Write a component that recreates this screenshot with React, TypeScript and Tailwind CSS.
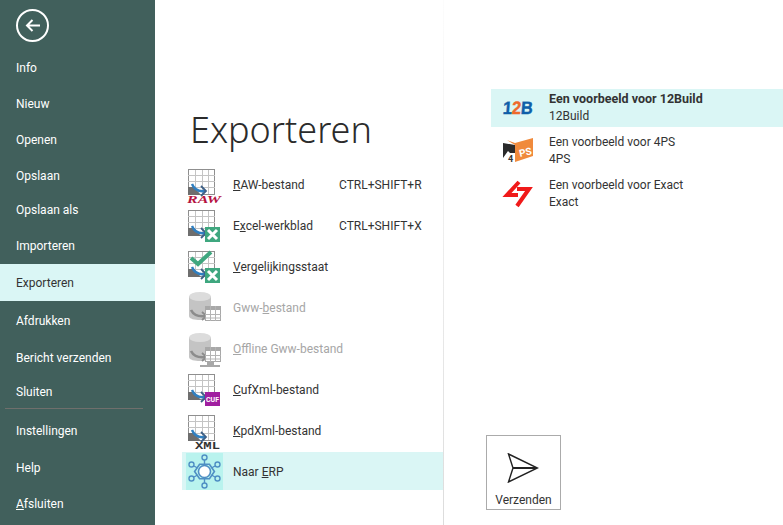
const font = { fontFamily: 'Roboto, "Noto Sans", sans-serif' }

function GridBase() {
    return (
        <g>
            <rect x="1.5" y="1.5" width="26" height="25" fill="#fff" stroke="#8f8f8f" />
            <path d="M1 7.5H28M1 13.5H28M1 19.5H28M8.5 2V26M15.5 2V26M21.5 2V26" stroke="#c4c4c4" fill="none" />
            <path d="M1 19H7L14 27H1Z" fill="#6e6e6e" />
        </g>
    )
}

function Arrow({ y = 22 }: { y?: number }) {
    return (
        <g>
            <path d={`M5 ${y - 3}C7 ${y + 2} 11 ${y + 5} 18 ${y + 4}`} stroke="#2f7fc1" strokeWidth="2.4" fill="none" />
            <path d={`M14 ${y - 1}L19 ${y + 4}L14 ${y + 9}`} stroke="#3d5f86" strokeWidth="1.8" fill="none" />
        </g>
    )
}

function ExcelBadge() {
    return (
        <g>
            <rect x="18" y="18" width="15" height="15" fill="#3fa77f" />
            <path d="M21 21L30 30M30 21L21 30" stroke="#fff" strokeWidth="3" />
        </g>
    )
}

function RawIcon() {
    return (
        <svg width="36" height="38" viewBox="0 0 36 38">
            <g transform="translate(0 1)">
                <GridBase />
                <Arrow y={19} />
                <text x="0" y="35" fontSize="11" fontWeight="700" fontStyle="italic" fill="#b5123f" textLength="34" lengthAdjust="spacingAndGlyphs" style={{ fontFamily: '"Liberation Serif", serif' }}>RAW</text>
            </g>
        </svg>
    )
}

function ExcelIcon() {
    return (
        <svg width="36" height="36" viewBox="0 0 36 36">
            <GridBase />
            <Arrow y={20} />
            <ExcelBadge />
        </svg>
    )
}

function CompareIcon() {
    return (
        <svg width="36" height="36" viewBox="0 0 36 36">
            <GridBase />
            <path d="M4 8L11 14L24 2" stroke="#3fa77f" strokeWidth="4" fill="none" />
            <Arrow y={20} />
            <ExcelBadge />
        </svg>
    )
}

function GwwIcon({ offline }: { offline?: boolean }) {
    return (
        <svg width="36" height="36" viewBox="0 0 36 36">
            <path d="M2 5V25C2 28 8 29 13 29C20 29 24 28 24 25V5Z" fill="#c4c4c4" />
            <ellipse cx="13" cy="5.5" rx="11" ry="4.5" fill="#dcdcdc" />
            <path d="M4 19C7 25 12 26 19 25" stroke="#8c8c8c" strokeWidth="2.6" fill="none" />
            <path d="M15 21L19.5 25L15 29" stroke="#8c8c8c" strokeWidth="1.8" fill="none" />
            <rect x="18.5" y="15.5" width="15" height="14" fill="#fff" stroke="#a8a8a8" />
            <rect x="18" y="15" width="16" height="4" fill="#a8a8a8" />
            <path d="M18 23.5H34M18 27H34M23.5 15V30M28.5 15V30" stroke="#b4b4b4" fill="none" />
            {offline && <path d="M13 33H33V35H13ZM20 30H27V33H20Z" fill="#a8a8a8" />}
        </svg>
    )
}

function CufIcon() {
    return (
        <svg width="36" height="36" viewBox="0 0 36 36">
            <GridBase />
            <Arrow y={20} />
            <rect x="18" y="19" width="15" height="14" fill="#a01fa0" />
            <text x="25.5" y="29" fontSize="8" fontWeight="700" fill="#fff" textAnchor="middle" textLength="13" lengthAdjust="spacingAndGlyphs" style={font}>CUF</text>
        </svg>
    )
}

function XmlIcon() {
    return (
        <svg width="40" height="40" viewBox="0 0 40 40">
            <g transform="translate(0 2)">
                <GridBase />
                <Arrow y={19} />
                <text x="8" y="35" fontSize="11" fontWeight="700" fill="#333" textLength="25" lengthAdjust="spacingAndGlyphs" style={{ fontFamily: '"Liberation Mono", monospace' }}>XML</text>
            </g>
        </svg>
    )
}

function ErpIcon() {
    return (
        <svg width="37" height="37" viewBox="0 0 37 37" className="bg-[#b9f3ee]">
            <g stroke="#4f8fc4" strokeWidth="1.4" fill="none">
                <path d="M18.5 7V11M18.5 26V30M11.5 15L8 13M25.5 15L29 13M11.5 22L8 24M25.5 22L29 24" />
                <circle cx="18.5" cy="4.5" r="2.5" />
                <circle cx="18.5" cy="32.5" r="2.5" />
                <circle cx="5.5" cy="11.5" r="2.5" />
                <circle cx="31.5" cy="11.5" r="2.5" />
                <circle cx="5.5" cy="25.5" r="2.5" />
                <circle cx="31.5" cy="25.5" r="2.5" />
                <path d="M13 10.5H24L29.5 18.5L24 26.5H13L7.5 18.5Z" strokeWidth="1.8" transform="translate(18.5 18.5) scale(.9) translate(-18.5 -18.5)" />
            </g>
            <circle cx="18.5" cy="18.5" r="6" fill="#fff" stroke="#4f8fc4" strokeWidth="1.6" />
        </svg>
    )
}

function Logo12B() {
    return (
        <svg width="34" height="24" viewBox="0 0 34 24">
            <text x="2" y="18.5" fontSize="18" fontWeight="900" stroke="#0f5ea8" strokeWidth=".5" textLength="30" lengthAdjust="spacingAndGlyphs" transform="skewX(-5)" style={{ fontFamily: '"Liberation Sans", sans-serif' }}>
                <tspan fill="#0f5ea8">1</tspan>
                <tspan fill="#ee6a2c" stroke="#ee6a2c">2</tspan>
                <tspan fill="#0f5ea8">B</tspan>
            </text>
        </svg>
    )
}

function Logo4PS() {
    return (
        <svg width="32" height="26" viewBox="0 0 32 26">
            <path d="M1 5L13 7V15H8L6 13L1 20Z" fill="#2a2a2a" />
            <path d="M13 5L31 0V18L13 24Z" fill="#f08a3c" />
            <path d="M5 2L13 5V7Z" fill="#f08a3c" />
            <text x="17" y="18" fontSize="10" fontWeight="700" fill="#fff" transform="rotate(-12 22 14)" style={font}>PS</text>
            <text x="6" y="24" fontSize="9" fontWeight="700" fill="#333" style={font}>4</text>
        </svg>
    )
}

function LogoExact() {
    return (
        <svg width="32" height="28" viewBox="0 0 32 28" fill="none" stroke="#f01a1a" strokeWidth="4">
            <path d="M17 2L5 15H16" />
            <path d="M15 9H27L15 26" />
        </svg>
    )
}

// heights are what the picture has, the rows are not evenly spaced
const menu = [
    { label: "Info", h: "h-[36px]" },
    { label: "Nieuw", h: "h-[36px]" },
    { label: "Openen", h: "h-[36px]" },
    { label: "Opslaan", h: "h-[36px]" },
    { label: "Opslaan als", h: "h-[33px]" },
    { label: "Importeren", h: "h-[38px]" },
    { label: "Exporteren", h: "h-[37px]", active: true },
    { label: "Afdrukken", h: "h-[39px]" },
    { label: "Bericht verzenden", h: "h-[34px]" },
    { label: "Sluiten", h: "h-[34px]" },
]

const bottomMenu = [
    { label: "Instellingen", h: "h-[42px]" },
    { label: "Help", h: "h-[33px]" },
    { label: <><u>A</u>fsluiten</>, h: "h-[39px]" },
]

const exportRows = [
    { icon: <RawIcon />, label: <><u>R</u>AW-bestand</>, shortcut: "CTRL+SHIFT+R" },
    { icon: <ExcelIcon />, label: <>E<u>x</u>cel-werkblad</>, shortcut: "CTRL+SHIFT+X" },
    { icon: <CompareIcon />, label: <><u>V</u>ergelijkingsstaat</> },
    { icon: <GwwIcon />, label: <>Gww-<u>b</u>estand</>, disabled: true },
    { icon: <GwwIcon offline />, label: <><u>O</u>ffline Gww-bestand</>, disabled: true },
    { icon: <CufIcon />, label: <><u>C</u>ufXml-bestand</> },
    { icon: <XmlIcon />, label: <><u>K</u>pdXml-bestand</> },
]

const erpRows = [
    { icon: <Logo12B />, title: "Een voorbeeld voor 12Build", sub: "12Build", active: true },
    { icon: <Logo4PS />, title: "Een voorbeeld voor 4PS", sub: "4PS" },
    { icon: <LogoExact />, title: "Een voorbeeld voor Exact", sub: "Exact" },
]

export default function App() {
    return (
        <div className="flex h-[525px] w-[783px] overflow-hidden bg-white text-[12px] text-[#333]" style={font}>
            <div className="flex w-[155px] shrink-0 flex-col bg-[#41605c] text-white">
                <div className="h-[49px] pl-[16px] pt-[9px]">
                    <div className="flex h-[33px] w-[33px] items-center justify-center rounded-full border-2 border-white">
                        <svg width="15" height="13" viewBox="0 0 15 13" fill="none" stroke="#fff" strokeWidth="2">
                            <path d="M15 6.5H2M7.5 1L2 6.5L7.5 12" />
                        </svg>
                    </div>
                </div>
                {menu.map((m) => (
                    <div key={m.label} className={`flex items-center pl-[16px] pt-px ${m.h} ${m.active ? "bg-[#daf6f5] text-[#333]" : ""}`}>
                        {m.label}
                    </div>
                ))}
                <div className="ml-[5px] h-px w-[138px] bg-[#6f6f6c]" />
                {bottomMenu.map((m, i) => (
                    <div key={i} className={`flex items-center pl-[16px] pt-px ${m.h}`}>
                        {m.label}
                    </div>
                ))}
            </div>

            <div className="w-[288px] shrink-0 pl-[27px]">
                <div className="flex h-[165px] items-end pb-[10px] pl-[8px] text-[36px] leading-[50px] font-light text-[#2b2b2b]" style={{ fontFamily: '"Noto Sans", sans-serif' }}>
                    Exporteren
                </div>
                {exportRows.map((r, i) => (
                    <div key={i} className={`flex h-[41px] items-center pl-[5px] ${r.disabled ? "text-[#a6a6a6]" : ""}`}>
                        <div className="w-[46px] shrink-0">{r.icon}</div>
                        <div className="w-[106px] shrink-0 -translate-y-px whitespace-nowrap">{r.label}</div>
                        {r.shortcut && <div className="-translate-y-px whitespace-nowrap">{r.shortcut}</div>}
                    </div>
                ))}
                <div className="flex h-[38px] items-center bg-[#daf6f5] pl-[4px]">
                    <div className="w-[47px] shrink-0"><ErpIcon /></div>
                    <div className="pt-px">Naar <u>E</u>RP</div>
                </div>
            </div>

            <div className="w-px shrink-0 bg-linear-to-b from-[#fcfcfc] to-[#dcdcdc]" />

            <div className="flex flex-1 flex-col pb-[15px] pl-[42px] pt-[89px]">
                <div className="flex flex-col gap-[5px] pl-[5px]">
                    {erpRows.map((r) => (
                        <div key={r.sub} className={`flex h-[38px] items-center pl-[11px] ${r.active ? "bg-[#daf6f5]" : ""}`}>
                            <div className="w-[47px] shrink-0">{r.icon}</div>
                            <div className="leading-[16px]">
                                <div className={`-translate-y-px ${r.active ? "text-[12.5px] font-bold" : ""}`}>{r.title}</div>
                                <div>{r.sub}</div>
                            </div>
                        </div>
                    ))}
                </div>
                <div className="mt-auto flex h-[75px] w-[75px] flex-col items-center border border-[#ababab] pt-[17px]">
                    <svg width="32" height="30" viewBox="0 0 32 30" fill="none" stroke="#222" strokeWidth="1.4" className="-translate-x-px">
                        <path d="M1.5 1L30.5 15L1.5 29L6 15Z" />
                        <path d="M6 15H30" strokeWidth="2" />
                    </svg>
                    <div className="mt-[8px]">Verzenden</div>
                </div>
            </div>
        </div>
    )
}
